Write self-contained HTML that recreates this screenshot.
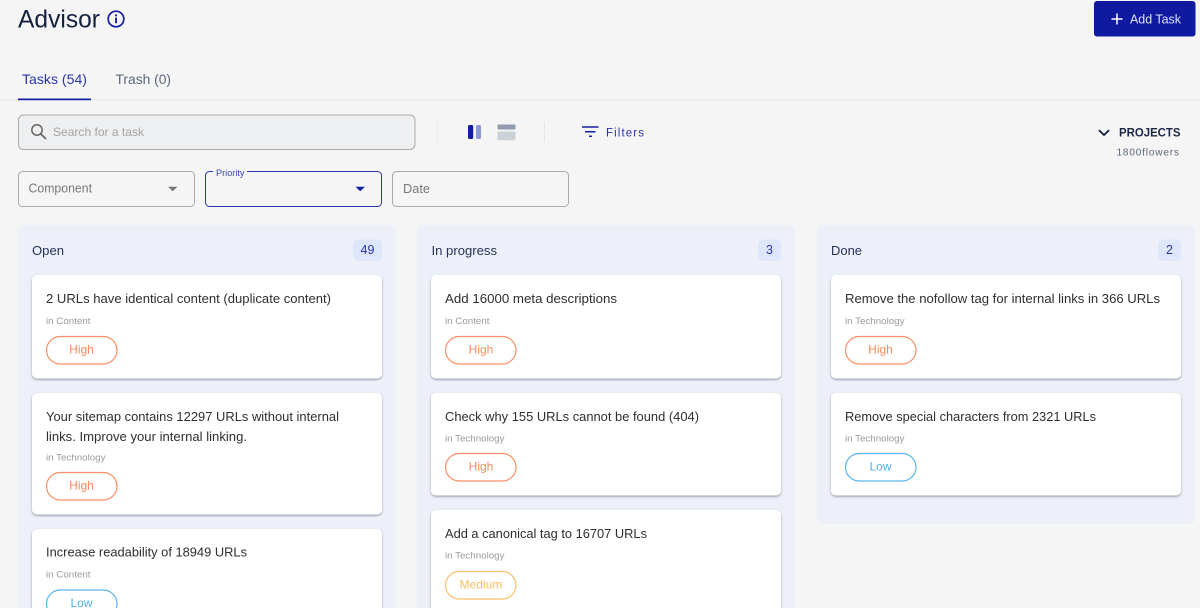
<!DOCTYPE html>
<html lang="en"><head><meta charset="utf-8"><title>Advisor</title>
<style>
html,body{margin:0;padding:0;background:#f5f5f5;width:1200px;height:608px;overflow:hidden}
svg{display:block}
text{font-family:"Liberation Sans",sans-serif}
.t{font-size:13px;fill:#2e2e33}
.s{font-size:9.5px;fill:#9a9a9a}
.p{font-size:12px;text-anchor:middle}
.ct{font-size:13px;fill:#25325a}
.b{font-size:12.5px;fill:#2a35ab;text-anchor:middle}
.card{fill:#fff;filter:url(#sh)}
.pill{fill:#fff;stroke-width:1.2}
.hi{stroke:#f98f66}.lo{stroke:#5ab6ec}.me{stroke:#fdc06a}
.thi{fill:#f98a5e}.tlo{fill:#4fb0ea}.tme{fill:#fdbd5e}
</style></head><body>
<svg width="1200" height="608" viewBox="0 0 1200 608" xmlns="http://www.w3.org/2000/svg">
<defs><filter id="sh" x="-5%" y="-10%" width="110%" height="125%"><feDropShadow dx="0" dy="1.2" stdDeviation="1.1" flood-color="#3a3f55" flood-opacity=".5"/></filter></defs>
<rect width="1200" height="608" fill="#f5f5f5"/>

<text x="18" y="27.5" font-size="25" fill="#14223f" textLength="82" lengthAdjust="spacingAndGlyphs">Advisor</text>
<circle cx="116" cy="19" r="7.8" fill="none" stroke="#141ea0" stroke-width="1.7"/>
<rect x="115.1" y="17.6" width="1.9" height="5.6" fill="#141ea0"/><rect x="115.1" y="14.4" width="1.9" height="1.9" fill="#141ea0"/>

<rect x="1094" y="1" width="101.500" height="35.500" rx="3" fill="#0f1aa0"/>
<path d="M1117 13.500V24.500M1111.500 19H1122.500" stroke="#fff" stroke-width="1.500" fill="none"/>
<text x="1130" y="23.500" font-size="13" fill="#dfe3f5" textLength="51" lengthAdjust="spacingAndGlyphs">Add Task</text>

<rect x="0" y="99" width="1200" height="1.500" fill="#e8e8e8"/>
<text x="22" y="84" font-size="14" fill="#2a35ab" textLength="65" lengthAdjust="spacingAndGlyphs">Tasks (54)</text>
<text x="115.500" y="84" font-size="14" fill="#5c677d" textLength="55.500" lengthAdjust="spacingAndGlyphs">Trash (0)</text>
<rect x="18" y="98.500" width="73" height="1.700" fill="#141ea0"/>

<rect x="18.500" y="115" width="396.500" height="34.500" rx="5" fill="#eeeff0" stroke="#aaa" stroke-width="1"/>
<circle cx="37" cy="130" r="5.200" fill="none" stroke="#666" stroke-width="1.500"/>
<path d="M40.800 134L46 139" stroke="#666" stroke-width="1.800" fill="none"/>
<text x="53" y="136" font-size="12" fill="#a3a3a3" textLength="91" lengthAdjust="spacingAndGlyphs">Search for a task</text>

<rect x="436.500" y="122" width="1" height="20" fill="#e6e6e6"/>
<rect x="544" y="122" width="1" height="20" fill="#e6e6e6"/>
<rect x="468" y="125" width="5.200" height="14" rx="1.500" fill="#141ea0"/>
<rect x="476" y="125" width="5" height="14" rx="1.500" fill="#8f99d8"/>
<rect x="497.500" y="124.500" width="18" height="5" rx="1" fill="#929cae"/>
<rect x="497.500" y="131.500" width="18" height="8.800" rx="1" fill="#ccd1d8"/>

<path d="M582 127H598.500M585 131.700H595.500M589 136.300H592" stroke="#141ea0" stroke-width="1.500" fill="none"/>
<text x="606" y="136.500" font-size="11.500" fill="#2a35ab" textLength="38" lengthAdjust="spacing">Filters</text>

<path d="M1099 130.200L1104 135L1109 130.200" stroke="#14223f" stroke-width="1.800" fill="none"/>
<text x="1119" y="136.500" font-size="12" font-weight="700" fill="#1a2744" textLength="61.500" lengthAdjust="spacingAndGlyphs">PROJECTS</text>
<text x="1116.500" y="155.500" font-size="10" fill="#5c677d" textLength="62.500" lengthAdjust="spacing">1800flowers</text>

<rect x="18.500" y="171.500" width="176" height="35" rx="4" fill="none" stroke="#aaa"/>
<text x="28.500" y="192.500" font-size="12.500" fill="#777" textLength="63.500" lengthAdjust="spacingAndGlyphs">Component</text>
<path d="M168 186.800H177.500L172.700 191.300Z" fill="#777"/>

<rect x="205.500" y="171.500" width="176" height="35" rx="4" fill="none" stroke="#2a35ab"/>
<rect x="213" y="170" width="34" height="3" fill="#f5f5f5"/>
<text x="216" y="176" font-size="9" fill="#3a45b0" textLength="28.500" lengthAdjust="spacingAndGlyphs">Priority</text>
<path d="M355.500 186.800H365L360.200 191.300Z" fill="#141ea0"/>

<rect x="392.500" y="171.500" width="176" height="35" rx="4" fill="none" stroke="#aaa"/>
<text x="403" y="193" font-size="12.500" fill="#777" textLength="27" lengthAdjust="spacingAndGlyphs">Date</text>

<!-- Open -->
<path d="M18 608V231a6 6 0 0 1 6-6H390a6 6 0 0 1 6 6V608Z" fill="#edf0f8"/>
<text class="ct" x="32" y="255" textLength="32" lengthAdjust="spacingAndGlyphs">Open</text>
<rect x="353" y="239.500" width="29" height="21.500" rx="5" fill="#dde6fb"/>
<text class="b" x="367.500" y="254">49</text>

<rect class="card" x="32" y="275" width="350" height="103.500" rx="5"/>
<text class="t" x="46" y="303" textLength="285" lengthAdjust="spacingAndGlyphs">2 URLs have identical content (duplicate content)</text>
<text class="s" x="46" y="324" textLength="44.500" lengthAdjust="spacingAndGlyphs">in Content</text>
<rect class="pill hi" x="46.500" y="336.500" width="70.500" height="27.500" rx="13.750"/>
<text class="p thi" x="81.500" y="353.500">High</text>

<rect class="card" x="32" y="393" width="350" height="121.500" rx="5"/>
<text class="t" x="46" y="421" textLength="293" lengthAdjust="spacingAndGlyphs">Your sitemap contains 12297 URLs without internal</text>
<text class="t" x="46" y="441" textLength="201" lengthAdjust="spacingAndGlyphs">links. Improve your internal linking.</text>
<text class="s" x="46" y="460.500" textLength="59.500" lengthAdjust="spacingAndGlyphs">in Technology</text>
<rect class="pill hi" x="46.500" y="472.500" width="70.500" height="27.500" rx="13.750"/>
<text class="p thi" x="81.500" y="489.500">High</text>

<rect class="card" x="32" y="529" width="350" height="110" rx="5"/>
<text class="t" x="46" y="556.500" textLength="201" lengthAdjust="spacingAndGlyphs">Increase readability of 18949 URLs</text>
<text class="s" x="46" y="577.500" textLength="44.500" lengthAdjust="spacingAndGlyphs">in Content</text>
<rect class="pill lo" x="46.500" y="590" width="70.500" height="27.500" rx="13.750"/>
<text class="p tlo" x="81.500" y="607">Low</text>

<!-- In progress -->
<path d="M417 608V231a6 6 0 0 1 6-6H789a6 6 0 0 1 6 6V608Z" fill="#edf0f8"/>
<text class="ct" x="431.500" y="255" textLength="65.500" lengthAdjust="spacingAndGlyphs">In progress</text>
<rect x="758" y="239.500" width="23" height="21.500" rx="5" fill="#dde6fb"/>
<text class="b" x="769.500" y="254">3</text>

<rect class="card" x="431" y="275" width="350" height="103.500" rx="5"/>
<text class="t" x="445" y="303" textLength="172" lengthAdjust="spacingAndGlyphs">Add 16000 meta descriptions</text>
<text class="s" x="445" y="324" textLength="44.500" lengthAdjust="spacingAndGlyphs">in Content</text>
<rect class="pill hi" x="445.500" y="336.500" width="70.500" height="27.500" rx="13.750"/>
<text class="p thi" x="481" y="353.500">High</text>

<rect class="card" x="431" y="393" width="350" height="102.500" rx="5"/>
<text class="t" x="445" y="421" textLength="254" lengthAdjust="spacingAndGlyphs">Check why 155 URLs cannot be found (404)</text>
<text class="s" x="445" y="441.500" textLength="59.500" lengthAdjust="spacingAndGlyphs">in Technology</text>
<rect class="pill hi" x="445.500" y="453.500" width="70.500" height="27.500" rx="13.750"/>
<text class="p thi" x="481" y="470.500">High</text>

<rect class="card" x="431" y="510" width="350" height="120" rx="5"/>
<text class="t" x="445" y="538" textLength="202" lengthAdjust="spacingAndGlyphs">Add a canonical tag to 16707 URLs</text>
<text class="s" x="445" y="558.500" textLength="59.500" lengthAdjust="spacingAndGlyphs">in Technology</text>
<rect class="pill me" x="445.500" y="571.500" width="70.500" height="27.500" rx="13.750"/>
<text class="p tme" x="481" y="588.500">Medium</text>

<!-- Done -->
<rect x="817" y="225" width="378" height="299" rx="6" fill="#edf0f8"/>
<text class="ct" x="831" y="255" textLength="31" lengthAdjust="spacingAndGlyphs">Done</text>
<rect x="1158" y="239.500" width="23" height="21.500" rx="5" fill="#dde6fb"/>
<text class="b" x="1169.500" y="254">2</text>

<rect class="card" x="831" y="275" width="350" height="103.500" rx="5"/>
<text class="t" x="845" y="303" textLength="315" lengthAdjust="spacingAndGlyphs">Remove the nofollow tag for internal links in 366 URLs</text>
<text class="s" x="845" y="324" textLength="59.500" lengthAdjust="spacingAndGlyphs">in Technology</text>
<rect class="pill hi" x="845.500" y="336.500" width="70.500" height="27.500" rx="13.750"/>
<text class="p thi" x="880.500" y="353.500">High</text>

<rect class="card" x="831" y="393" width="350" height="102.500" rx="5"/>
<text class="t" x="845" y="421" textLength="251" lengthAdjust="spacingAndGlyphs">Remove special characters from 2321 URLs</text>
<text class="s" x="845" y="441.500" textLength="59.500" lengthAdjust="spacingAndGlyphs">in Technology</text>
<rect class="pill lo" x="845.500" y="453.500" width="70.500" height="27.500" rx="13.750"/>
<text class="p tlo" x="880.500" y="470.500">Low</text>
</svg>
</body></html>
